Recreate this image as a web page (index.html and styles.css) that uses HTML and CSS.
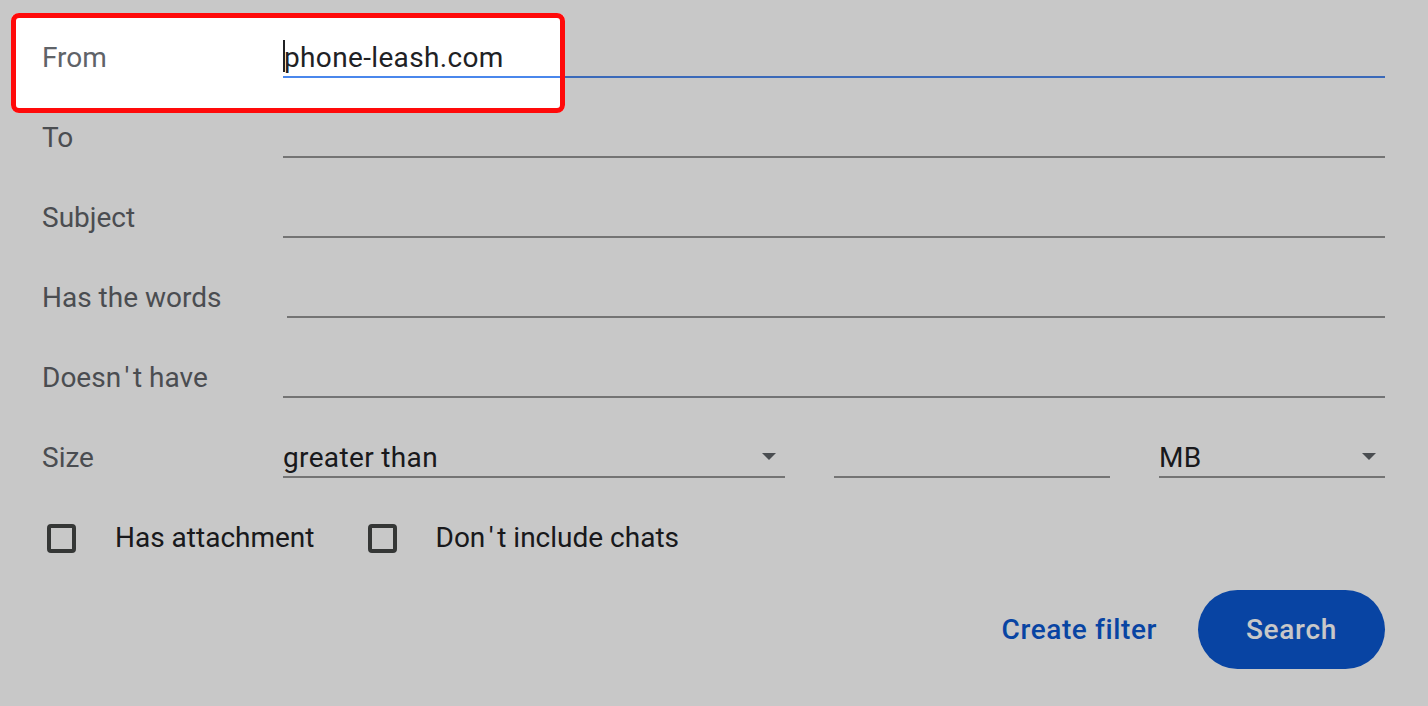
FILE: index.html
```html
<!DOCTYPE html>
<html lang="en">
<head>
<meta charset="utf-8">
<title>Advanced search</title>
<link rel="stylesheet" href="styles.css">
</head>
<body>
<div class="form">
  <div class="row">
    <div class="label">From</div>
    <div class="field focused"><span class="caret"></span>phone-leash.com</div>
  </div>
  <div class="row">
    <div class="label">To</div>
    <div class="field"></div>
  </div>
  <div class="row">
    <div class="label">Subject</div>
    <div class="field"></div>
  </div>
  <div class="row">
    <div class="label">Has the words</div>
    <div class="field shifted"></div>
  </div>
  <div class="row">
    <div class="label">Doesn<span class="apos">'</span>t have</div>
    <div class="field"></div>
  </div>
  <div class="row">
    <div class="label">Size</div>
    <div class="size-group">
      <div class="field select op">greater than<span class="arrow"></span></div>
      <div class="field num"></div>
      <div class="field select unit">MB<span class="arrow"></span></div>
    </div>
  </div>
  <div class="checks">
    <label class="check"><span class="box"></span><span class="check-text">Has attachment</span></label>
    <label class="check"><span class="box"></span><span class="check-text">Don<span class="apos">'</span>t include chats</span></label>
  </div>
  <div class="actions">
    <span class="link-btn">Create filter</span>
    <span class="primary-btn">Search</span>
  </div>
  <div class="highlight"></div>
</div>
</body>
</html>
```

FILE: styles.css
```css
html, body {
  margin: 0;
  padding: 0;
  background: #ffffff;
}

body {
  width: 1428px;
  height: 706px;
  overflow: hidden;
  font-family: Roboto, "Liberation Sans", Arial, sans-serif;
}

.form {
  position: relative;
  padding: 20px 43px 0 42px;
}

.row {
  display: flex;
  align-items: flex-end;
  height: 58px;
  margin-bottom: 22px;
}

.label {
  width: 241px;
  flex: none;
  font-size: 28px;
  line-height: 32px;
  color: #5f6368;
  padding-bottom: 4px;
}

.apos {
  padding: 0 3.5px;
}

.field {
  flex: 1;
  box-sizing: border-box;
  height: 58px;
  display: flex;
  align-items: flex-end;
  padding-bottom: 2px;
  border-bottom: 2px solid #949494;
  font-size: 28px;
  line-height: 32px;
  letter-spacing: 0.35px;
  color: #202124;
  white-space: nowrap;
}

.field.focused {
  border-bottom-color: #4a87ec;
}

.field.shifted {
  margin-left: 4px;
}

.caret {
  display: inline-block;
  width: 2px;
  height: 32px;
  margin-bottom: 2px;
  margin-right: -1px;
  background: #202124;
  align-self: flex-end;
}

.size-group {
  flex: 1;
  display: flex;
  gap: 49px;
}

.field.op {
  flex: none;
  width: 502px;
}

.field.num {
  flex: none;
  width: 276px;
}

.field.unit {
  flex: 1;
}

.select {
  justify-content: space-between;
}

.arrow {
  width: 0;
  height: 0;
  border-left: 7px solid transparent;
  border-right: 7px solid transparent;
  border-top: 7px solid #5f6368;
  margin: 0 9px 14px 0;
}

.checks {
  display: flex;
  align-items: center;
  height: 76px;
  margin-top: 22px;
  padding-left: 5px;
}

.check {
  display: flex;
  align-items: center;
  margin-right: 53px;
}

.box {
  box-sizing: border-box;
  width: 29px;
  height: 29px;
  border: 4px solid #444746;
  border-radius: 4px;
  margin-right: 39px;
}

.check-text {
  font-size: 28px;
  line-height: 32px;
  color: #202124;
}

.actions {
  display: flex;
  justify-content: flex-end;
  align-items: center;
  margin-top: 14px;
  height: 79px;
}

.link-btn {
  font-size: 28px;
  font-weight: 500;
  letter-spacing: 0.6px;
  color: #0b57d0;
  margin-right: 41px;
}

.primary-btn {
  display: flex;
  align-items: center;
  justify-content: center;
  width: 187px;
  height: 79px;
  border-radius: 40px;
  background: #0b57d0;
  color: #ffffff;
  font-size: 28px;
  font-weight: 500;
  letter-spacing: 0.7px;
}

.highlight {
  position: absolute;
  left: 11px;
  top: 13px;
  width: 554px;
  height: 100px;
  box-sizing: border-box;
  border: 5px solid #ff0a0a;
  border-radius: 8px;
  box-shadow: 0 0 0 3000px rgba(0, 0, 0, 0.216);
  z-index: 5;
}
```
